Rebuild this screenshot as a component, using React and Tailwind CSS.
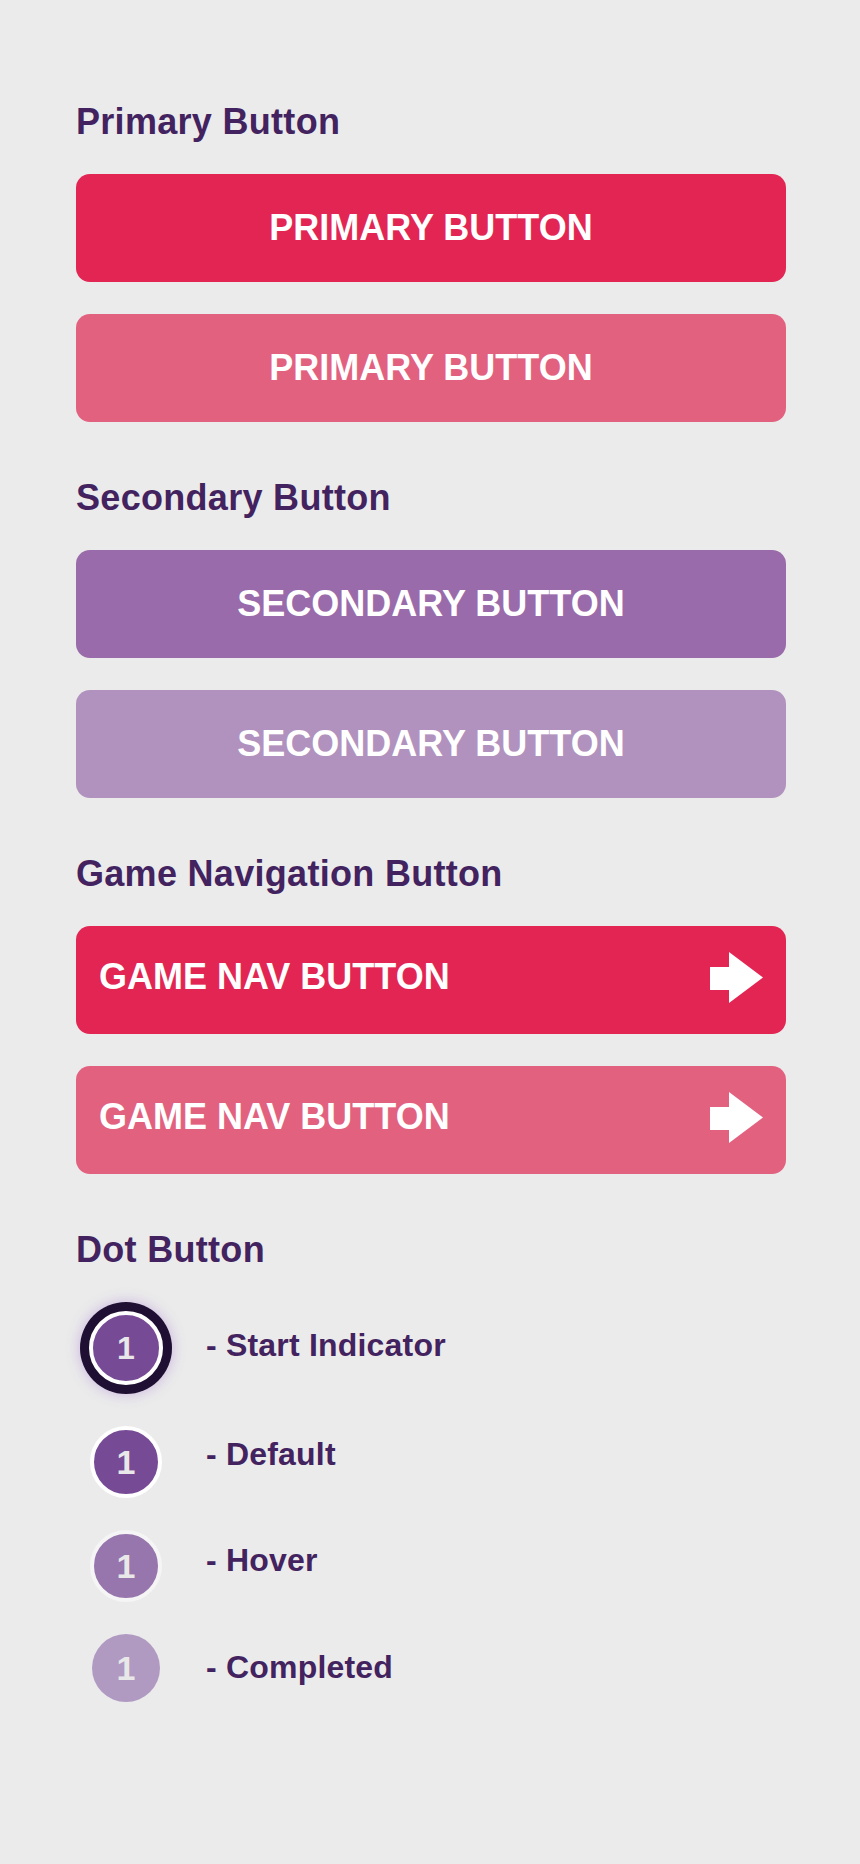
const FONT = { fontFamily: '"Liberation Sans", Arial, sans-serif' }

const SECTION_GAP = 'mt-[56px]'

function SectionHeading({ children, className = '' }) {
  return (
    <h2 className={`text-[36px] font-bold leading-10 tracking-[0.3px] text-[#43235f] ${className}`}>
      {children}
    </h2>
  )
}

function BlockButton({ label, color }) {
  return (
    <button
      type="button"
      className={`flex h-[108px] w-full items-center justify-center rounded-[14px] text-[36px] font-bold leading-10 text-white ${color}`}
    >
      {label}
    </button>
  )
}

function ArrowIcon() {
  return (
    <svg width="54" height="51" viewBox="0 0 54 51" aria-hidden="true">
      <path d="M0 15 H19 V0 L53 25.5 L19 51 V38 H0 Z" fill="#ffffff" />
    </svg>
  )
}

function NavButton({ label, color }) {
  return (
    <button
      type="button"
      className={`flex h-[108px] w-full items-center justify-between rounded-[14px] pb-[6px] pl-[23px] pr-[22px] text-[36px] font-bold leading-10 text-white ${color}`}
    >
      <span>{label}</span>
      <ArrowIcon />
    </button>
  )
}

function StartDot() {
  return (
    <div className="h-[92px] w-[92px] rounded-full bg-[#1f0f33] p-[9px] shadow-[0_0_14px_rgba(160,110,210,0.45)]">
      <div className="flex h-full w-full items-center justify-center rounded-full border-4 border-white bg-[#774a96] text-[32px] font-bold leading-none text-[#e8e8e8]">
        1
      </div>
    </div>
  )
}

function Dot({ className }) {
  return (
    <div
      className={`flex items-center justify-center rounded-full text-[34px] font-bold leading-none text-[#e8e8e8] ${className}`}
    >
      1
    </div>
  )
}

const DOT_ROWS = [
  { label: '- Start Indicator', dot: <StartDot />, offset: 'mt-[23px]' },
  {
    label: '- Default',
    dot: <Dot className="h-[72px] w-[72px] border-4 border-white bg-[#774a96]" />,
    offset: 'mt-2',
  },
  {
    label: '- Hover',
    dot: <Dot className="h-[72px] w-[72px] border-4 border-[#f5f5f5] bg-[#9775ad]" />,
    offset: 'mt-[10px]',
  },
  {
    label: '- Completed',
    dot: <Dot className="h-[68px] w-[68px] bg-[#b09ac2]" />,
    offset: 'mt-[13px]',
  },
]

export default function App() {
  return (
    <div className="min-h-[1864px] bg-[#ebebeb] pb-20 pl-[76px] pr-[74px] pt-[102px]" style={FONT}>
      <section>
        <SectionHeading>Primary Button</SectionHeading>
        <div className="mt-8 flex flex-col gap-8">
          <BlockButton label="PRIMARY BUTTON" color="bg-[#e22552]" />
          <BlockButton label="PRIMARY BUTTON" color="bg-[#e2617f]" />
        </div>
      </section>

      <section className={SECTION_GAP}>
        <SectionHeading>Secondary Button</SectionHeading>
        <div className="mt-8 flex flex-col gap-8">
          <BlockButton label="SECONDARY BUTTON" color="bg-[#9a6baa]" />
          <BlockButton label="SECONDARY BUTTON" color="bg-[#b192be]" />
        </div>
      </section>

      <section className={SECTION_GAP}>
        <SectionHeading>Game Navigation Button</SectionHeading>
        <div className="mt-8 flex flex-col gap-8">
          <NavButton label="GAME NAV BUTTON" color="bg-[#e22552]" />
          <NavButton label="GAME NAV BUTTON" color="bg-[#e2617f]" />
        </div>
      </section>

      <section className={SECTION_GAP}>
        <SectionHeading>Dot Button</SectionHeading>
        <div className="mt-8 flex flex-col gap-8">
          {DOT_ROWS.map((row) => (
            <div key={row.label} className="flex items-start">
              <div className="flex w-[100px] justify-center">{row.dot}</div>
              <p className={`ml-[30px] text-[32px] font-bold leading-10 tracking-[0.2px] text-[#43235f] ${row.offset}`}>
                {row.label}
              </p>
            </div>
          ))}
        </div>
      </section>
    </div>
  )
}
